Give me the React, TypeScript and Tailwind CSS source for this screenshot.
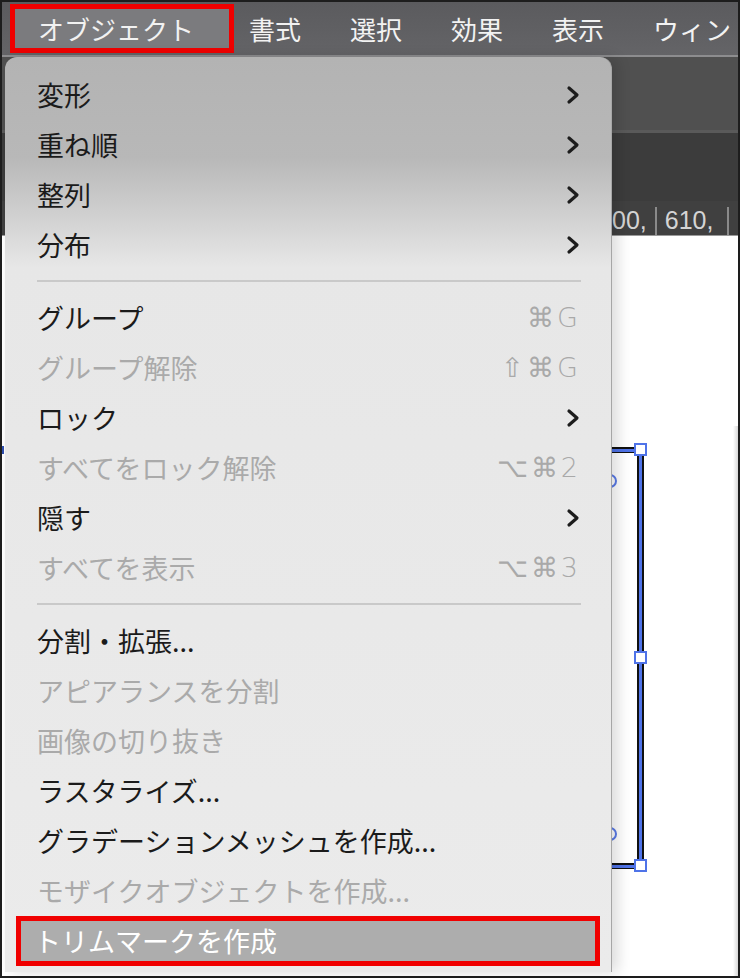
import React from "react";

type Item =
  | { kind: "item"; label: string; disabled?: boolean; sub?: boolean; shortcut?: string; active?: boolean }
  | { kind: "sep" };

const items: Item[] = [
  { kind: "item", label: "変形", sub: true },
  { kind: "item", label: "重ね順", sub: true },
  { kind: "item", label: "整列", sub: true },
  { kind: "item", label: "分布", sub: true },
  { kind: "sep" },
  { kind: "item", label: "グループ", shortcut: "⌘G" },
  { kind: "item", label: "グループ解除", disabled: true, shortcut: "⇧⌘G" },
  { kind: "item", label: "ロック", sub: true },
  { kind: "item", label: "すべてをロック解除", disabled: true, shortcut: "⌥⌘2" },
  { kind: "item", label: "隠す", sub: true },
  { kind: "item", label: "すべてを表示", disabled: true, shortcut: "⌥⌘3" },
  { kind: "sep" },
  { kind: "item", label: "分割・拡張..." },
  { kind: "item", label: "アピアランスを分割", disabled: true },
  { kind: "item", label: "画像の切り抜き", disabled: true },
  { kind: "item", label: "ラスタライズ..." },
  { kind: "item", label: "グラデーションメッシュを作成..." },
  { kind: "item", label: "モザイクオブジェクトを作成...", disabled: true },
  { kind: "item", label: "トリムマークを作成", active: true },
];

const jp = { fontFamily: '"Noto Sans CJK JP", "Noto Sans", sans-serif' };

function Chevron() {
  return (
    <svg width="14" height="20" viewBox="0 0 14 20" className="mr-[1px]">
      <path d="M3 3 L11 10 L3 17" fill="none" stroke="#1c1c1c" strokeWidth="3.2" strokeLinecap="round" strokeLinejoin="round" />
    </svg>
  );
}

function Shortcut({ text }: { text: string }) {
  return (
    <span
      className="text-[27px] tracking-[3px] text-[#a9a9a9]"
      style={{ fontFamily: '"DejaVu Sans", "Liberation Sans", sans-serif', fontWeight: 300 }}
    >
      {text}
    </span>
  );
}

function Handle() {
  return <div className="h-[13px] w-[13px] border-2 border-[#4f73e8] bg-white" />;
}

export default function App() {
  const menuBar = ["書式", "選択", "効果", "表示", "ウィン"];
  return (
    <div className="relative flex h-[978px] w-[740px] flex-col overflow-hidden border-2 border-[#1d1d1d] bg-white" style={jp}>
      {/* menu bar */}
      <div className="flex h-[53px] items-center bg-gradient-to-b from-[#5b5b5e] to-[#646467] text-[26px] text-[#f2f2f2]">
        <div className="ml-[8px] flex h-[49px] w-[224px] items-center border-[5px] border-[#f00000] bg-[#7b7b7e] pl-[23px]">
          オブジェクト
        </div>
        <div className="flex gap-[49px] pl-[15px]">
          {menuBar.map((m) => (
            <span key={m} className="whitespace-nowrap">
              {m}
            </span>
          ))}
        </div>
      </div>
      <div className="h-[2px] bg-[#8d8d8f]" />

      {/* panels behind menu */}
      <div className="h-[73px] bg-[#505050]" />
      <div className="h-[3px] bg-[#5a5a5a]" />
      <div className="h-[68px] bg-[#3c3c3c]" />
      <div className="relative flex h-[34px] items-end bg-[#404040] pl-[610px] text-[25px] text-[#d4d4d4]" style={{ fontFamily: '"Liberation Sans", sans-serif' }}>
        <span className="mb-[2px] leading-none">00,</span>
        <span className="mx-[8px] h-[28px] w-[2px] bg-[#8a8a8a]" />
        <span className="mb-[2px] leading-none">610,</span>
        <span className="ml-[14px] h-[28px] w-[2px] bg-[#8a8a8a]" />
      </div>
      <div className="h-[1px] bg-[#9a9a9a]" />
      <div className="relative flex-1 bg-white">
        <div className="absolute right-0 top-[190px] h-[560px] w-[5px] bg-gradient-to-r from-white to-[#d8d8d8]" />
        {/* artwork on the canvas */}
        <div className="absolute left-[600px] top-[211px] h-[6px] w-[42px] bg-[#111]">
          <div className="mt-[1.5px] h-[3px] bg-[#4f73e8]" />
        </div>
        <div className="absolute left-[600px] top-[627px] h-[6px] w-[42px] bg-[#111]">
          <div className="mt-[1.5px] h-[3px] bg-[#4f73e8]" />
        </div>
        <div className="absolute left-[635px] top-[214px] flex h-[418px] w-[7px] justify-center bg-[#111]">
          <div className="w-[3px] bg-[#4f73e8]" />
        </div>
        <div className="absolute left-[632px] top-[207px]">
          <Handle />
        </div>
        <div className="absolute left-[632px] top-[415px]">
          <Handle />
        </div>
        <div className="absolute left-[632px] top-[623px]">
          <Handle />
        </div>
        <div className="absolute left-[601px] top-[238px] h-[14px] w-[14px] rounded-full border-2 border-[#5a7be8]" />
        <div className="absolute left-[601px] top-[591px] h-[14px] w-[14px] rounded-full border-2 border-[#5a7be8]" />
        <div className="absolute left-[-2px] top-[210px] h-[8px] w-[4px] bg-[#2f4fb0]" />
      </div>

      {/* dropdown menu */}
      <div
        className="absolute left-[3px] top-[55px] w-[607px] rounded-t-[12px] border-r border-[#a6a6a6] pb-[6px] pt-[13px] shadow-[6px_0_14px_rgba(0,0,0,0.14)]"
        style={{ background: "linear-gradient(180deg,#b3b3b3 0%,#b8b8b8 11%,#cfcfcf 17%,#e7e7e7 23%,#ebebeb 100%)" }}
      >
        {items.map((it, i) =>
          it.kind === "sep" ? (
            <div key={i} className="flex h-[23px] items-center pl-[32px] pr-[30px]">
              <div className="mt-[-2px] h-[2px] w-full bg-[#c9c9c9]" />
            </div>
          ) : it.active ? (
            <div key={i} className="h-[50px] px-[11px]">
              <div className="flex h-full items-center border-[5px] border-[#f00000] bg-[#adadad] pl-[13px] text-[27px] text-white">
                {it.label}
              </div>
            </div>
          ) : (
            <div
              key={i}
              className={`flex h-[50px] items-center justify-between pl-[32px] pr-[30px] text-[27px] ${
                it.disabled ? "text-[#aaaaaa]" : "text-[#1b1b1b]"
              }`}
            >
              <span className="whitespace-nowrap">{it.label}</span>
              {it.sub && <Chevron />}
              {it.shortcut && <Shortcut text={it.shortcut} />}
            </div>
          )
        )}
      </div>
    </div>
  );
}
